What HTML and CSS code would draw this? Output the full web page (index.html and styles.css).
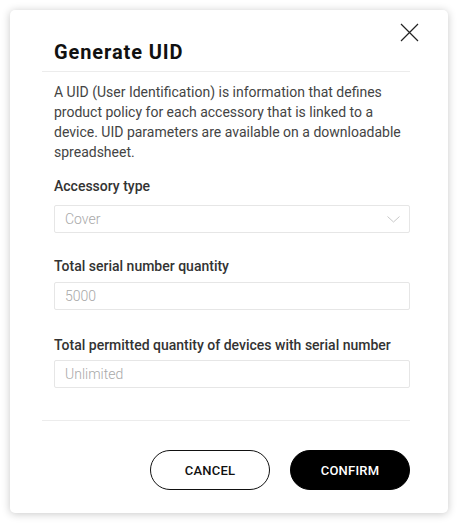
FILE: index.html
```html
<!DOCTYPE html>
<html lang="en">
<head>
<meta charset="utf-8">
<title>Generate UID</title>
<link rel="stylesheet" href="styles.css">
</head>
<body>
<div class="dialog">
  <button class="close" aria-label="Close">
    <svg width="19" height="19" viewBox="0 0 19 19"><path d="M1 1L18 18M18 1L1 18" stroke="#222" stroke-width="1.2" fill="none"/></svg>
  </button>
  <div class="head">
    <h1 class="title">Generate UID</h1>
  </div>
  <div class="body">
    <p class="desc">A UID (User Identification) is information that defines product policy for each accessory that is linked to a device. UID parameters are available on a downloadable spreadsheet.</p>
    <div class="field field-select">
      <label class="label">Accessory type</label>
      <div class="input select">
        <span>Cover</span>
        <svg width="13" height="7" viewBox="0 0 13 7"><path d="M0.5 0.5L6.5 6L12.5 0.5" stroke="#c8c8c8" stroke-width="1" fill="none"/></svg>
      </div>
    </div>
    <div class="field field-qty">
      <label class="label">Total serial number quantity</label>
      <div class="input"><span>5000</span></div>
    </div>
    <div class="field field-devices">
      <label class="label">Total permitted quantity of devices with serial number</label>
      <div class="input"><span>Unlimited</span></div>
    </div>
  </div>
  <div class="foot">
    <button class="btn btn-outline">CANCEL</button>
    <button class="btn btn-solid">CONFIRM</button>
  </div>
</div>
</body>
</html>
```
FILE: styles.css
```css
* { box-sizing: border-box; }
html, body { margin: 0; padding: 0; background: #fff; }
body {
  padding: 10px 13px 14px 10px;
  font-family: Roboto, "Liberation Sans", Arial, sans-serif;
}
.dialog {
  position: relative;
  width: 438px;
  height: 503px;
  background: #fff;
  border-radius: 5px;
  box-shadow: 0 1px 8px rgba(0, 0, 0, 0.22);
  padding: 30px 38px 0 32px;
}
.close {
  position: absolute;
  top: 13px;
  right: 29px;
  width: 19px;
  height: 19px;
  padding: 0;
  border: 0;
  background: none;
  display: flex;
}
.head {
  border-bottom: 1px solid #ececec;
  padding: 0 0 7px 12px;
}
.title {
  margin: 0;
  font-size: 20px;
  line-height: 24px;
  font-weight: 700;
  letter-spacing: 0.9px;
  color: #111;
}
.body {
  padding: 10px 0 32px 12px;
  border-bottom: 1px solid #ececec;
}
.desc {
  margin: 0 0 14px;
  font-size: 14px;
  line-height: 20px;
  color: #444;
}
.field { display: flex; flex-direction: column; }
.field-qty { margin-top: 23px; }
.field-devices { margin-top: 25px; }
.label {
  font-size: 14px;
  line-height: 20px;
  font-weight: 500;
  color: #333;
  margin-bottom: 5px;
}
.field-select .label { margin-bottom: 9px; }
.field-qty .label { margin-bottom: 6px; }
.input {
  height: 28px;
  border: 1px solid #e6e6e6;
  border-radius: 2px;
  display: flex;
  align-items: center;
  justify-content: space-between;
  padding: 0 9px 0 10px;
  font-size: 14px;
  font-weight: 300;
  color: #a8a8a8;
}
.foot {
  display: flex;
  justify-content: flex-end;
  gap: 20px;
  padding-top: 29px;
}
.btn {
  width: 120px;
  height: 40px;
  border-radius: 20px;
  font-family: Roboto, "Liberation Sans", Arial, sans-serif;
  font-size: 13px;
  font-weight: 500;
  letter-spacing: 0.2px;
  cursor: pointer;
}
.btn-outline {
  background: #fff;
  border: 1px solid #111;
  color: #111;
}
.btn-solid {
  background: #000;
  border: 1px solid #000;
  color: #fff;
}
```
